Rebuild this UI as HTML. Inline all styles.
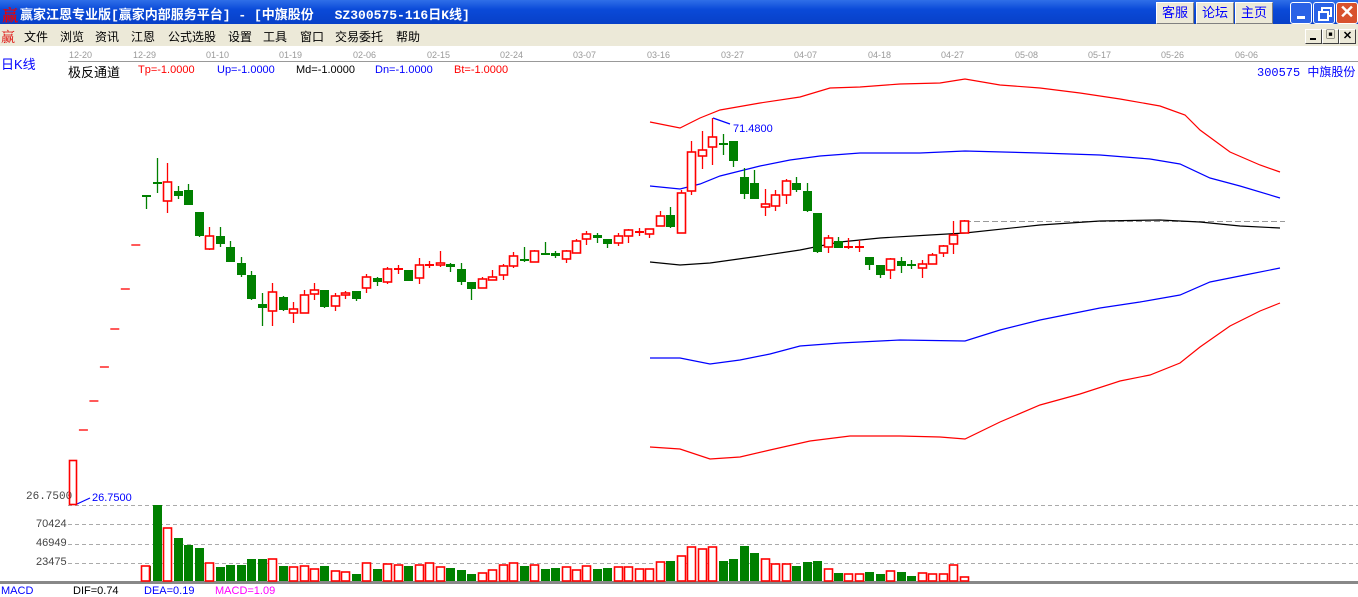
<!DOCTYPE html>
<html><head><meta charset="utf-8"><style>
*{margin:0;padding:0}
body{width:1358px;height:597px;overflow:hidden;background:#fff;font-family:"Liberation Sans","Noto Sans CJK SC",sans-serif;position:relative}
.t{position:absolute;white-space:nowrap}
#title{position:absolute;left:0;top:0;width:1358px;height:24px;background:linear-gradient(#2f6fe8,#0a4ad8 40%,#0840c8);}
#menu{position:absolute;left:0;top:24px;width:1358px;height:22px;background:#ece9d8}
.m{position:absolute;top:28px;font-size:12px;color:#000;white-space:nowrap}
.btn{position:absolute;top:2px;height:20px;background:#ece9d8;border:1px solid #fff;border-right-color:#808080;border-bottom-color:#808080;color:#0000ff;font-size:13px;line-height:20px;text-align:center}
.wb{position:absolute;top:2px;width:20px;height:20px;border:1px solid #fff;border-radius:3px;background:#2a62e6}
.sb{position:absolute;top:29px;width:15px;height:13px;background:#ece9d8;border:1px solid #fff;border-right-color:#404040;border-bottom-color:#404040}
</style></head><body>
<div id="title"></div>
<div class="t" style="left:2px;top:3px;color:#e00;font-size:16px;font-weight:bold;font-family:'Noto Serif CJK SC',serif">赢</div>
<div class="t" style="left:20px;top:4px;color:#fff;font-size:13px;font-weight:bold;font-family:'Liberation Mono','Noto Sans CJK SC',monospace">赢家江恩专业版[赢家内部服务平台] - [中旗股份　 SZ300575-116日K线]</div>
<div class="btn" style="left:1156px;width:36px">客服</div>
<div class="btn" style="left:1196px;width:36px">论坛</div>
<div class="btn" style="left:1235px;width:36px">主页</div>
<div class="wb" style="left:1290px"><div style="position:absolute;left:6px;top:13px;width:8px;height:3px;background:#fff"></div></div>
<div class="wb" style="left:1313px"><div style="position:absolute;left:7px;top:4px;width:7px;height:6px;border:2px solid #fff"></div><div style="position:absolute;left:4px;top:8px;width:7px;height:6px;border:2px solid #fff;background:#2a62e6"></div></div>
<div class="wb" style="left:1336px;width:20px;background:#d8522e;color:#fff;font-size:18px;line-height:19px;text-align:center;font-weight:bold">✕</div>
<div id="menu"></div>
<div class="t" style="left:1px;top:27px;color:#d00;font-size:14px;font-family:'Noto Serif CJK SC',serif">赢</div>
<div class="m" style="left:24px">文件</div><div class="m" style="left:60px">浏览</div><div class="m" style="left:95px">资讯</div><div class="m" style="left:131px">江恩</div><div class="m" style="left:168px">公式选股</div><div class="m" style="left:228px">设置</div><div class="m" style="left:263px">工具</div><div class="m" style="left:300px">窗口</div><div class="m" style="left:335px">交易委托</div><div class="m" style="left:396px">帮助</div>
<div class="sb" style="left:1305px"><div style="position:absolute;left:4px;top:8px;width:6px;height:2px;background:#000"></div></div>
<div class="sb" style="left:1322px;font-size:10px;line-height:12px;text-align:center">▣</div>
<div class="sb" style="left:1339px;font-size:11px;line-height:13px;text-align:center;font-weight:bold">✕</div>

<div class="t" style="left:1px;top:54px;color:#00f;font-size:13px">日K线</div>
<div class="t" style="left:68px;top:62px;color:#000;font-size:13px">极反通道</div>
<div class="t" style="left:138px;top:64px;color:#f00;font-size:11px">Tp=-1.0000</div>
<div class="t" style="left:217px;top:64px;color:#00f;font-size:11px">Up=-1.0000</div>
<div class="t" style="left:296px;top:64px;color:#000;font-size:11px">Md=-1.0000</div>
<div class="t" style="left:375px;top:64px;color:#00f;font-size:11px">Dn=-1.0000</div>
<div class="t" style="left:454px;top:64px;color:#f00;font-size:11px">Bt=-1.0000</div>
<div class="t" style="left:1257px;top:63px;color:#00f;font-size:12px;font-family:'Liberation Mono','Noto Sans CJK SC',monospace">300575 中旗股份</div>
<div class="t" style="left:26px;top:491px;color:#444;font-size:11px;font-family:'Liberation Mono',monospace">26.7500</div>
<div class="t" style="left:36px;top:518px;color:#444;font-size:11px">70424</div>
<div class="t" style="left:36px;top:537px;color:#444;font-size:11px">46949</div>
<div class="t" style="left:36px;top:556px;color:#444;font-size:11px">23475</div>
<div class="t" style="left:1px;top:585px;color:#00f;font-size:11px">MACD</div>
<div class="t" style="left:73px;top:585px;color:#000;font-size:11px">DIF=0.74</div>
<div class="t" style="left:144px;top:585px;color:#00f;font-size:11px">DEA=0.19</div>
<div class="t" style="left:215px;top:585px;color:#f0f;font-size:11px">MACD=1.09</div>
<div class="t" style="left:92px;top:492px;color:#00f;font-size:11px">26.7500</div>
<div class="t" style="left:733px;top:123px;color:#00f;font-size:11px">71.4800</div>

<svg id="s" width="1358" height="597" style="position:absolute;left:0;top:0" xmlns="http://www.w3.org/2000/svg">
<g font-size="9" fill="#999" font-family="Liberation Sans">
<text x="69" y="58">12-20</text><text x="133" y="58">12-29</text><text x="206" y="58">01-10</text><text x="279" y="58">01-19</text><text x="353" y="58">02-06</text><text x="427" y="58">02-15</text><text x="500" y="58">02-24</text><text x="573" y="58">03-07</text><text x="647" y="58">03-16</text><text x="721" y="58">03-27</text><text x="794" y="58">04-07</text><text x="868" y="58">04-18</text><text x="941" y="58">04-27</text><text x="1015" y="58">05-08</text><text x="1088" y="58">05-17</text><text x="1161" y="58">05-26</text><text x="1235" y="58">06-06</text>
</g>
<line x1="68" y1="61.5" x2="1358" y2="61.5" stroke="#999"/>
<g stroke="#aaa" stroke-dasharray="4,3"><line x1="68" y1="505.5" x2="1358" y2="505.5"/><line x1="68" y1="524.5" x2="1358" y2="524.5"/><line x1="68" y1="544.5" x2="1358" y2="544.5"/><line x1="68" y1="563.5" x2="1358" y2="563.5"/></g>
<line x1="965" y1="221.5" x2="1285" y2="221.5" stroke="#999" stroke-dasharray="6,3"/>
<rect x="0" y="581" width="1358" height="3" fill="#888"/>
<g fill="none" stroke-width="1.2">
<polyline stroke="#f00" points="650,122 680,128 700,118 720,110 760,103 800,97 830,88 860,87 900,84 940,83 965,79 1000,85 1040,88 1080,93 1120,99 1160,106 1185,115 1200,130 1230,152 1260,165 1280,172"/>
<polyline stroke="#00f" points="650,186 680,189 700,184 720,176 760,166 790,160 820,156 860,153 920,153 965,151 1040,153 1100,155 1150,159 1180,164 1210,178 1240,186 1280,198"/>
<polyline stroke="#000" points="650,262 680,265 710,263 760,256 800,250 840,242 880,238 930,235 965,233 1040,225 1100,221 1160,220 1200,222 1240,226 1280,228"/>
<polyline stroke="#00f" points="650,358 680,358 710,364 740,360 770,354 800,346 840,343 900,340 965,341 1000,330 1040,320 1100,308 1140,302 1180,295 1210,282 1250,274 1280,268"/>
<polyline stroke="#f00" points="650,447 680,449 710,459 740,457 770,450 810,441 850,436 900,436 940,437 965,439 1000,422 1040,405 1080,394 1120,381 1150,375 1180,363 1200,347 1230,326 1260,311 1280,303"/>
<polyline stroke="#00f" points="713,118 730,124"/>
<polyline stroke="#00f" points="77,504 90,498"/>
</g>
<g id="c"></g>
</svg>
<script>
var D=[[196,196,196,209],[183,183,158,193],[201,182,163,213,1],[191,196,186,199],[190,205,184,205],[212,236,212,237],[249,236,227,250,1],[236,244,227,247],[247,262,241,262],[263,275,257,277],[275,299,271,300],[304,308,293,326],[311,292,283,326,1],[297,310,296,311],[313,309,302,323,1],[313,295,290,313,1],[294,290,283,300,1],[290,307,290,308],[306,296,293,311,1],[295,293,291,299,1],[291,299,291,301],[288,277,274,293,1],[278,282,277,286],[282,269,267,284,1],[270,269,265,274,1],[270,281,270,281],[278,265,258,284,1],[266,265,261,268,1],[265,263,251,267,1],[264,267,263,272],[269,282,263,285],[282,289,282,300],[288,279,277,288,1],[280,277,270,280,1],[275,266,264,280,1],[266,256,252,268,1],[259,261,247,262],[262,251,250,262,1],[253,255,242,255],[253,256,251,258],[259,251,250,263,1],[253,241,239,253,1],[239,234,231,245,1],[235,238,233,243],[239,244,239,248],[243,236,233,246,1],[236,230,229,243,1],[232,232,228,236,1],[234,229,229,238,1],[226,216,211,226,1],[215,227,207,228],[233,193,190,233,1],[191,152,141,195,1],[156,150,131,169,1],[147,137,118,165,1],[144,144,134,155],[141,161,141,167],[177,194,168,199],[183,199,170,199],[207,204,189,216,1],[206,195,190,211,1],[195,181,179,204,1],[183,190,177,192],[191,211,183,212],[213,252,213,253],[247,238,235,253,1],[241,248,237,248],[247,247,238,249,1],[247,247,240,252,1],[257,265,257,270],[265,275,265,278],[270,259,258,279,1],[261,266,257,273],[265,265,260,269],[268,264,260,278,1],[264,255,253,264,1],[253,246,245,257,1],[244,235,221,254,1],[233,221,220,233,1]];
var V=[566,505,528,538,545,548,563,567,565,565,559,559,559,566,567,566,569,566,571,572,574,563,569,564,565,566,565,563,567,568,570,574,573,570,565,563,566,565,569,568,567,570,566,569,568,567,567,569,569,562,561,556,547,549,547,561,559,546,553,559,564,564,566,562,561,569,573,574,574,572,574,571,572,576,573,574,574,565,577];
var s='',R='#f00',G='#008000';
s+='<rect x="69.5" y="460.5" width="7" height="44" fill="none" stroke="'+R+'" stroke-width="1.6"/>';
[[135.8,245],[125.3,289],[114.8,329],[104.4,367],[93.9,401],[83.4,430]].forEach(function(d){s+='<line x1="'+(d[0]-4.5)+'" y1="'+d[1]+'" x2="'+(d[0]+4.5)+'" y2="'+d[1]+'" stroke="'+R+'" stroke-width="1.3"/>';});
for(var i=0;i<D.length;i++){var d=D[i],x=Math.round(146.3+i*10.48),c=d[4]?R:G;
var t=Math.min(d[0],d[1]),b=Math.max(d[0],d[1]);
s+='<line x1="'+(x+.5)+'" y1="'+d[2]+'" x2="'+(x+.5)+'" y2="'+d[3]+'" stroke="'+c+'" stroke-width="1.3"/>';
if(b-t<2){s+='<rect x="'+(x-4)+'" y="'+(t-1)+'" width="9" height="2" fill="'+c+'"/>';}
else if(d[4]){s+='<rect x="'+(x-3.5)+'" y="'+t+'" width="8" height="'+(b-t)+'" fill="#fff" stroke="'+R+'" stroke-width="1.6"/>';}
else{s+='<rect x="'+(x-4)+'" y="'+t+'" width="9" height="'+(b-t)+'" fill="'+G+'"/>';}
var v=V[i];
if(d[4])s+='<rect x="'+(x-3.5)+'" y="'+v+'" width="8" height="'+(581-v)+'" fill="#fff" stroke="'+R+'" stroke-width="1.6"/>';
else s+='<rect x="'+(x-4)+'" y="'+v+'" width="9" height="'+(581-v)+'" fill="'+G+'"/>';}
s+='<rect x="141.5" y="566" width="8" height="15" fill="#fff" stroke="'+R+'" stroke-width="1.6"/>';
document.getElementById('c').innerHTML=s;
</script>
</body></html>
